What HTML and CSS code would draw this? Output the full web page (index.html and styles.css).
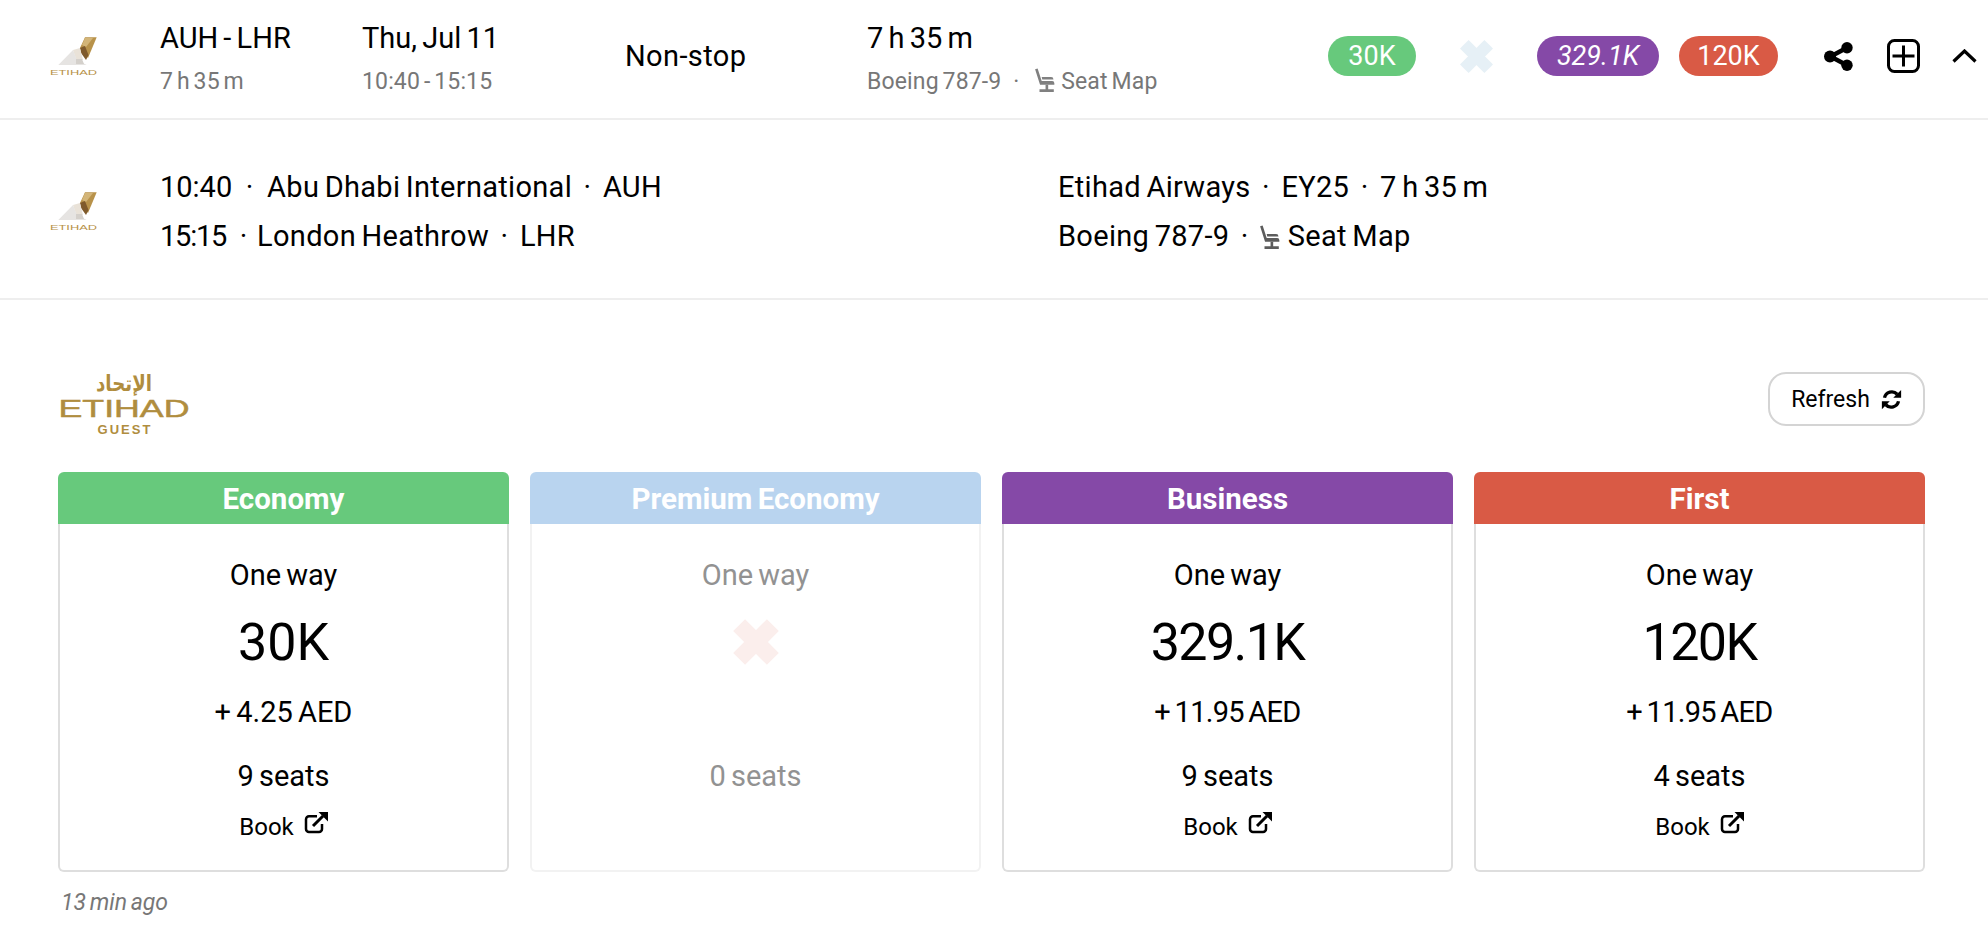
FILE: index.html
```html
<!DOCTYPE html>
<html lang="en">
<head>
<meta charset="utf-8">
<title>Flight detail</title>
<link rel="stylesheet" href="styles.css">
</head>
<body>
<svg class="defs" width="0" height="0" aria-hidden="true">
  <symbol id="tail" viewBox="0 0 47 38">
    <polygon points="35,0.300 46.700,0.300 38,21 30,11" fill="#b8924a"/>
    <polygon points="35,1 43,1 36,10 32,8" fill="#d3b578"/>
    <polygon points="30,11 35,9 38.500,18 36,23 31,16" fill="#7f5a2c"/>
    <polygon points="23,13 30,11 33,23 26,22" fill="#e9e2d8"/>
    <polygon points="8.300,28 23,13 27,23 36.700,28" fill="#e6e4e2"/>
    <polygon points="26,22 32,22 34,27 26,27" fill="#d4d0cb"/>
  </symbol>
  <symbol id="seat" viewBox="0 0 20 22">
    <path d="M1 .8 3.300 0 7 11.500h9.500a2 2 0 0 1 2 2v1.300H5.500z" fill="currentColor"/>
    <path d="M7 7.800h8.500a2.200 2.200 0 0 1 2.200 2.200H7.500z" fill="currentColor"/>
    <path d="M10.500 14.800h2.400v4.200h-2.400zM5 19h13v2.500H5z" fill="currentColor"/>
  </symbol>
  <symbol id="cross" viewBox="0 0 24 24">
    <path d="M4.500 4.500 19.500 19.500M19.500 4.500 4.500 19.500" fill="none" stroke="currentColor" stroke-width="7.500"/>
  </symbol>
  <symbol id="ext" viewBox="0 0 24 22">
    <path d="M13 4.200H5a3 3 0 0 0-3 3V17a3 3 0 0 0 3 3h10a3 3 0 0 0 3-3v-5" fill="none" stroke="currentColor" stroke-width="2.500"/>
    <path d="M9 14 19 4" fill="none" stroke="currentColor" stroke-width="3"/>
    <path d="M14.500 0H24v9.500z" fill="currentColor"/>
  </symbol>
</svg>

<header class="row summary">
  <div class="logo-cell"><svg class="tail" viewBox="0 0 49 42" role="img" aria-label="Etihad"><use href="#tail" x="1" width="47" height="38"/><text x="24.500" y="38" text-anchor="middle" textLength="47" lengthAdjust="spacingAndGlyphs" class="tail-word">ETIHAD</text></svg></div>
  <div class="stack"><div class="main">AUH - LHR</div><div class="sub">7 h 35 m</div></div>
  <div class="stack"><div class="main">Thu, Jul 11</div><div class="sub">10:40 - 15:15</div></div>
  <div class="main stops">Non-stop</div>
  <div class="stack"><div class="main">7 h 35 m</div><div class="sub">Boeing 787-9 <span class="dot">·</span> <svg class="seat"><use href="#seat"/></svg> Seat Map</div></div>
  <div class="awards">
    <span class="pill green w88">30K</span>
    <span class="slot"><svg class="cross-sm"><use href="#cross"/></svg></span>
    <span class="pill purple w122"><i>329.1K</i></span>
    <span class="pill red w99">120K</span>
  </div>
  <div class="actions">
    <svg class="ic-share" viewBox="0 0 29 29"><path d="M22.500 6 6.500 14.500l16 8.500" fill="none" stroke="#000" stroke-width="4.500"/><circle cx="23" cy="5.700" r="5.700"/><circle cx="6" cy="14.500" r="6"/><circle cx="23" cy="23.300" r="5.700"/></svg>
    <svg class="ic-plus" viewBox="0 0 33 34"><rect x="1.500" y="1.500" width="30" height="31" rx="6" fill="none" stroke="#000" stroke-width="3"/><path d="M16.500 6.500v21M5.500 17h22" stroke="#000" stroke-width="3"/></svg>
    <svg class="ic-chev" viewBox="0 0 25 14"><path d="M1.500 12.500 12.500 2l11 10.500" fill="none" stroke="#000" stroke-width="3.200"/></svg>
  </div>
</header>

<section class="row segment">
  <div class="logo-cell"><svg class="tail" viewBox="0 0 49 42" role="img" aria-label="Etihad"><use href="#tail" x="1" width="47" height="38"/><text x="24.500" y="38" text-anchor="middle" textLength="47" lengthAdjust="spacingAndGlyphs" class="tail-word">ETIHAD</text></svg></div>
  <div class="seg-col">
    <div class="seg-line"><span class="time">10:40</span> <span class="sep first">·</span> Abu Dhabi International <span class="sep">·</span> AUH</div>
    <div class="seg-line"><span class="time tight">15:15</span> <span class="sep first close">·</span> London Heathrow <span class="sep">·</span> LHR</div>
  </div>
  <div class="seg-col">
    <div class="seg-line">Etihad Airways <span class="sep">·</span> EY25 <span class="sep">·</span> 7 h 35 m</div>
    <div class="seg-line">Boeing 787-9 <span class="sep">·</span> <svg class="seat seat-lg"><use href="#seat"/></svg> Seat Map</div>
  </div>
</section>

<main class="program">
  <div class="program-head">
    <svg class="guest" viewBox="0 0 132 78" role="img" aria-label="Etihad Guest">
      <text x="66" y="19" text-anchor="middle" class="g-ar" textLength="56" lengthAdjust="spacingAndGlyphs">الإتحاد</text>
      <text x="66" y="45" text-anchor="middle" class="g-word" textLength="131" lengthAdjust="spacingAndGlyphs">ETIHAD</text>
      <text x="66" y="62" text-anchor="middle" class="g-sub" textLength="53">GUEST</text>
    </svg>
    <button class="refresh" type="button">Refresh
      <svg class="ic-sync" viewBox="0 0 24 24"><path d="M4 10a8.500 8.500 0 0 1 14.500-4" fill="none" stroke="#000" stroke-width="3.800"/><path d="M23 1v9h-9z"/><path d="M20 14A8.500 8.500 0 0 1 5.500 18" fill="none" stroke="#000" stroke-width="3.800"/><path d="M1 23v-9h9z"/></svg>
    </button>
  </div>

  <div class="cards">
    <article class="card">
      <h2 class="card-head green">Economy</h2>
      <div class="card-body">
        <div class="way">One way</div><div class="price">30K</div><div class="fee">+ 4.25 AED</div><div class="seats">9 seats</div>
        <a class="book">Book <svg class="ic-ext"><use href="#ext"/></svg></a>
      </div>
    </article>
    <article class="card off">
      <h2 class="card-head pale">Premium Economy</h2>
      <div class="card-body">
        <div class="way">One way</div><div class="price"><svg class="cross-lg"><use href="#cross"/></svg></div><div class="fee">&nbsp;</div><div class="seats">0 seats</div>
        <a class="book">&nbsp;</a>
      </div>
    </article>
    <article class="card">
      <h2 class="card-head purple">Business</h2>
      <div class="card-body">
        <div class="way">One way</div><div class="price narrow">329.1K</div><div class="fee narrow-fee">+ 11.95 AED</div><div class="seats">9 seats</div>
        <a class="book">Book <svg class="ic-ext"><use href="#ext"/></svg></a>
      </div>
    </article>
    <article class="card">
      <h2 class="card-head red">First</h2>
      <div class="card-body">
        <div class="way">One way</div><div class="price narrow">120K</div><div class="fee narrow-fee">+ 11.95 AED</div><div class="seats">4 seats</div>
        <a class="book">Book <svg class="ic-ext"><use href="#ext"/></svg></a>
      </div>
    </article>
  </div>
  <p class="ago">13 min ago</p>
</main>
</body>
</html>
```

FILE: styles.css
```css
* { box-sizing: border-box; }
html, body { margin: 0; padding: 0; background: #fff; }
body {
  color: #000;
  font-family: Roboto, "Liberation Sans", sans-serif;
  font-size: 29px;
  word-spacing: -2px;
  overflow: hidden;
}
.defs { position: absolute; }

.row { display: grid; align-items: center; border-bottom: 2px solid #eee; }
.summary {
  height: 120px;
  grid-template-columns: 160px 202px 263px 242px 461px auto auto;
  padding-bottom: 6px;
}
.segment {
  height: 180px;
  grid-template-columns: 160px 898px 1fr;
  padding-top: 4px;
}
.logo-cell { padding-left: 49px; display: flex; }
.tail { width: 49px; height: 42px; margin-bottom: -4px; }
.tail-word { font-family: "Liberation Sans", sans-serif; font-size: 8px; fill: #b8924a; }

.stack { display: flex; flex-direction: column; padding-top: 7px; }
.main { line-height: 36px; white-space: nowrap; }
.stops { letter-spacing: .4px; }
.stack .main { margin-top: -3px; }
.sub { font-size: 23px; line-height: 30px; margin-top: 11px; color: #777; white-space: nowrap; letter-spacing: .15px; }
.dot { margin: 0 8px; }
.seat { width: 22px; height: 25px; vertical-align: -4px; color: #808080; margin: 0 1px 0 3px; }
.seat-lg { color: #5c5c5c; margin: 0 1px 0 -1px; }

.awards { display: flex; align-items: center; height: 40px; }
.pill {
  height: 40px;
  border-radius: 20px;
  color: #fff;
  display: flex;
  align-items: center;
  justify-content: center;
  font-size: 27px;
}
.w88 { width: 88px; }
.w122 { width: 122px; }
.w99 { width: 99px; margin-left: 20px; }
.slot { width: 121px; display: flex; justify-content: center; }
.cross-sm { width: 39px; height: 39px; color: #e6f0f6; }
.green { background: #67c97c; }
.purple { background: #8549a7; }
.red { background: #d95a45; }
.pale { background: #b9d4ef; }

.actions { display: flex; align-items: center; margin-left: 34px; }
.ic-share { width: 29px; height: 29px; margin-right: 34px; }
.ic-plus { width: 33px; height: 34px; margin-right: 32px; }
.ic-chev { width: 25px; height: 14px; }

.seg-col { display: flex; flex-direction: column; gap: 13px; }
.seg-line { line-height: 36px; white-space: nowrap; letter-spacing: .3px; }
.time { letter-spacing: 0; }
.tight { letter-spacing: -1.2px; }
.sep { margin: 0 6px; }
.sep.first { margin: 0 8px; }
.sep.first.close { margin-right: 4px; }

.program { padding: 72px 63px 0 58px; }
.program-head { display: flex; justify-content: space-between; align-items: flex-start; height: 100px; }
.guest { width: 132px; height: 78px; }
.g-ar { font-family: "DejaVu Sans", sans-serif; font-size: 22px; font-weight: 700; fill: #b08d3e; }
.g-word { font-family: "Liberation Sans", sans-serif; font-size: 24px; fill: #b08d3e; stroke: #b08d3e; stroke-width: .5px; }
.g-sub { font-family: "Liberation Sans", sans-serif; font-size: 13px; font-weight: 700; fill: #b08d3e; }
.refresh {
  width: 157px;
  height: 54px;
  border: 2px solid #d4d4d4;
  border-radius: 18px;
  background: #fff;
  color: #000;
  font: 23px Roboto, sans-serif;
  display: flex;
  align-items: center;
  justify-content: center;
  gap: 11px;
  padding: 0;
}
.ic-sync { width: 21px; height: 21px; }

.cards { display: grid; grid-template-columns: repeat(4, 1fr); gap: 21px; }
.card-head {
  margin: 0;
  height: 52px;
  border-radius: 6px 6px 0 0;
  color: #fff;
  font-size: 29.5px;
  font-weight: 700;
  line-height: 55px;
  text-align: center;
}
.card-body {
  height: 348px;
  border: 2px solid #dedede;
  border-top: 0;
  border-radius: 0 0 6px 6px;
  text-align: center;
  padding-top: 31px;
}
.way { line-height: 40px; }
.price { font-size: 52px; line-height: 72px; margin-top: 12px; display: flex; justify-content: center; align-items: center; height: 72px; }
.narrow { letter-spacing: -1.600px; }
.fee { font-size: 29px; line-height: 40px; margin-top: 13px; }
.narrow-fee { letter-spacing: -.7px; }
.seats { line-height: 40px; margin-top: 24px; }
.book { display: block; font-size: 24px; line-height: 32px; margin-top: 15px; }
.ic-ext { width: 24px; height: 22px; margin-left: 6px; vertical-align: 1px; }

.off .card-body { border-color: #f2f2f2; color: #929292; }
.cross-lg { width: 54px; height: 54px; color: #fbeeec; margin-top: -3px; }

.ago { margin: 16px 0 0 3px; font-size: 23px; line-height: 30px; font-style: italic; color: #777; }
```
